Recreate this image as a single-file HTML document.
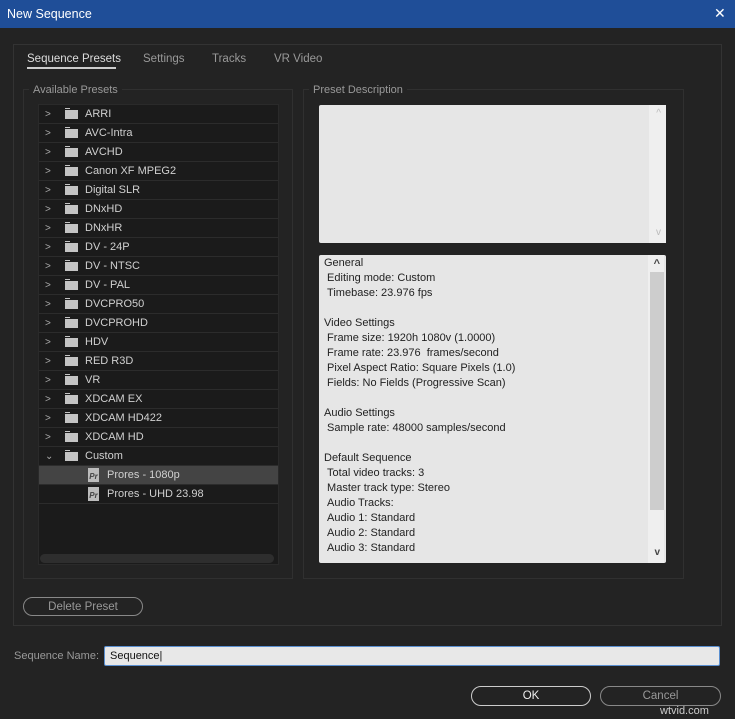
<!DOCTYPE html><html><head><style>
body{margin:0;width:735px;height:719px;background:#232323;font-family:"Liberation Sans",sans-serif;font-size:11px;position:relative;overflow:hidden}
.a{position:absolute}
.title{left:0;top:0;width:735px;height:28px;background:#1f4e98;color:#fff;font-size:12.5px}
.row{position:absolute;left:0;width:239px;height:18px;border-bottom:1px solid #2c2c2c;color:#d0d0d0;font-size:11px;line-height:19px}
.row .ch{position:absolute;left:6px;top:0;color:#aaa;font-size:10px}
.fold{position:absolute;left:26px;top:5px;width:13px;height:9px;background:#c4c4c4}
.fold:before{content:"";position:absolute;left:0;top:-2px;width:5px;height:1px;background:#c4c4c4}
.row .t{position:absolute;left:46px}
.pr{position:absolute;left:49px;top:2px;width:11px;height:14px;background:#bcbcbc;color:#444;font-size:8px;line-height:17px;text-align:center;font-weight:bold}
.btn{position:absolute;border:1px solid #aaa;border-radius:10px;color:#ccc;text-align:center;font-size:11.5px;line-height:19px}
.info div{height:15px;line-height:15px}
</style></head><body>
<div class="a title"><span class="a" style="left:7px;top:7px">New Sequence</span><span class="a" style="left:714px;top:5px;font-size:14px">✕</span></div>
<div class="a" style="left:13px;top:44px;width:707px;height:580px;border:1px solid #333"></div>
<div class="a" style="left:27px;top:53px;color:#ddd;font-size:11.5px">Sequence Presets</div>
<div class="a" style="left:27px;top:67px;width:89px;height:2px;background:#ccc"></div>
<div class="a" style="left:143px;top:53px;color:#999;font-size:11.5px">Settings</div>
<div class="a" style="left:212px;top:53px;color:#999;font-size:11.5px">Tracks</div>
<div class="a" style="left:274px;top:53px;color:#999;font-size:11.5px">VR Video</div>
<div class="a" style="left:23px;top:89px;width:268px;height:488px;border:1px solid #303030"></div>
<div class="a" style="left:29px;top:84px;padding:0 4px;background:#232323;color:#999;font-size:11px">Available Presets</div>
<div class="a" style="left:303px;top:89px;width:379px;height:488px;border:1px solid #303030"></div>
<div class="a" style="left:309px;top:84px;padding:0 4px;background:#232323;color:#999;font-size:11px">Preset Description</div>
<div class="a" style="left:38px;top:104px;width:239px;height:459px;background:#1b1b1b;border:1px solid #2a2a2a">
<div class="row" style="top:0"><span class="ch">&gt;</span><i class="fold"></i><span class="t">ARRI</span></div>
<div class="row" style="top:19px"><span class="ch">&gt;</span><i class="fold"></i><span class="t">AVC-Intra</span></div>
<div class="row" style="top:38px"><span class="ch">&gt;</span><i class="fold"></i><span class="t">AVCHD</span></div>
<div class="row" style="top:57px"><span class="ch">&gt;</span><i class="fold"></i><span class="t">Canon XF MPEG2</span></div>
<div class="row" style="top:76px"><span class="ch">&gt;</span><i class="fold"></i><span class="t">Digital SLR</span></div>
<div class="row" style="top:95px"><span class="ch">&gt;</span><i class="fold"></i><span class="t">DNxHD</span></div>
<div class="row" style="top:114px"><span class="ch">&gt;</span><i class="fold"></i><span class="t">DNxHR</span></div>
<div class="row" style="top:133px"><span class="ch">&gt;</span><i class="fold"></i><span class="t">DV - 24P</span></div>
<div class="row" style="top:152px"><span class="ch">&gt;</span><i class="fold"></i><span class="t">DV - NTSC</span></div>
<div class="row" style="top:171px"><span class="ch">&gt;</span><i class="fold"></i><span class="t">DV - PAL</span></div>
<div class="row" style="top:190px"><span class="ch">&gt;</span><i class="fold"></i><span class="t">DVCPRO50</span></div>
<div class="row" style="top:209px"><span class="ch">&gt;</span><i class="fold"></i><span class="t">DVCPROHD</span></div>
<div class="row" style="top:228px"><span class="ch">&gt;</span><i class="fold"></i><span class="t">HDV</span></div>
<div class="row" style="top:247px"><span class="ch">&gt;</span><i class="fold"></i><span class="t">RED R3D</span></div>
<div class="row" style="top:266px"><span class="ch">&gt;</span><i class="fold"></i><span class="t">VR</span></div>
<div class="row" style="top:285px"><span class="ch">&gt;</span><i class="fold"></i><span class="t">XDCAM EX</span></div>
<div class="row" style="top:304px"><span class="ch">&gt;</span><i class="fold"></i><span class="t">XDCAM HD422</span></div>
<div class="row" style="top:323px"><span class="ch">&gt;</span><i class="fold"></i><span class="t">XDCAM HD</span></div>
<div class="row" style="top:342px"><span class="ch">&#8964;</span><i class="fold"></i><span class="t">Custom</span></div>
<div class="row" style="top:361px;background:#444"><i class="pr">Pr</i><span class="t" style="left:68px">Prores - 1080p</span></div>
<div class="row" style="top:380px"><i class="pr">Pr</i><span class="t" style="left:68px">Prores - UHD 23.98</span></div>
<div class="a" style="left:1px;top:449px;width:234px;height:9px;border-radius:5px;background:#2e2e2e"></div>
</div>
<div class="a" style="left:319px;top:105px;width:347px;height:138px;background:#e6e6e6;border-radius:2px">
<div class="a" style="right:0;top:0;width:17px;height:138px;background:#efefef"></div>
<span class="a" style="right:5px;top:3px;color:#bbb;font-size:10px">^</span>
<span class="a" style="right:5px;top:122px;color:#bbb;font-size:10px">v</span></div>
<div class="a" style="left:319px;top:255px;width:347px;height:308px;background:#e6e6e6;border-radius:2px">
<div class="a" style="right:2px;top:0;width:16px;height:308px;background:#efefef"></div>
<div class="a" style="right:2px;top:17px;width:14px;height:238px;background:#cdcdcd"></div>
<span class="a" style="right:6px;top:3px;color:#444;font-size:11px;font-weight:bold">^</span>
<span class="a" style="right:6px;top:292px;color:#444;font-size:10px;font-weight:bold">v</span>
<div class="info a" style="left:5px;top:1px;color:#222;font-size:11px">
<div>General</div><div>&nbsp;Editing mode: Custom</div><div>&nbsp;Timebase: 23.976 fps</div><div></div>
<div>Video Settings</div><div>&nbsp;Frame size: 1920h 1080v (1.0000)</div><div>&nbsp;Frame rate: 23.976 &nbsp;frames/second</div><div>&nbsp;Pixel Aspect Ratio: Square Pixels (1.0)</div><div>&nbsp;Fields: No Fields (Progressive Scan)</div><div></div>
<div>Audio Settings</div><div>&nbsp;Sample rate: 48000 samples/second</div><div></div>
<div>Default Sequence</div><div>&nbsp;Total video tracks: 3</div><div>&nbsp;Master track type: Stereo</div><div>&nbsp;Audio Tracks:</div><div>&nbsp;Audio 1: Standard</div><div>&nbsp;Audio 2: Standard</div><div>&nbsp;Audio 3: Standard</div></div></div>
<div class="btn" style="left:23px;top:597px;width:118px;height:17px;line-height:18px;color:#999;border-color:#888">Delete Preset</div>
<div class="a" style="left:14px;top:650px;color:#999;font-size:11px">Sequence Name:</div>
<div class="a" style="left:104px;top:646px;width:614px;height:18px;background:#e8e8e8;border:1px solid #5a8fd0;border-radius:2px"><span class="a" style="left:5px;top:3px;color:#111;font-size:11px">Sequence|</span></div>
<div class="btn" style="left:471px;top:686px;width:118px;height:18px;color:#eee;border-color:#ccc">OK</div>
<div class="btn" style="left:600px;top:686px;width:119px;height:18px;color:#999;border-color:#888">Cancel</div>
<div class="a" style="left:660px;top:705px;color:#ccc;font-size:11px">wtvid.com</div>
</body></html>
